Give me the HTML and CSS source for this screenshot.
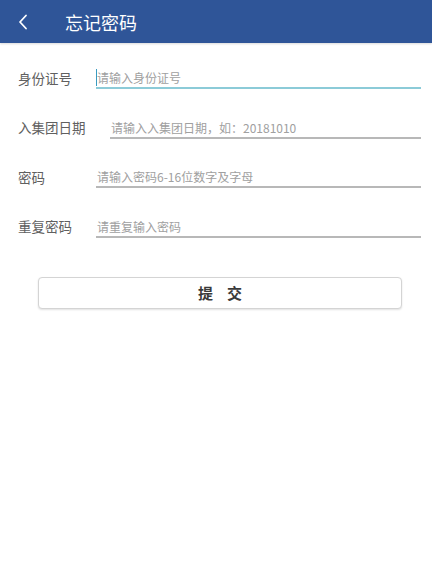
FILE: index.html
```html
<!DOCTYPE html>
<html lang="zh">
<head>
<meta charset="utf-8">
<link rel="stylesheet" href="styles.css">
</head>
<body>
<header class="topbar">
  <svg class="back" width="12" height="16" viewBox="0 0 12 16"><path d="M9 1.5 L3 8 L9 14.5" fill="none" stroke="#fff" stroke-width="1.8" stroke-linecap="round" stroke-linejoin="round"/></svg>
  <span class="title">忘记密码</span>
</header>
<main class="form">
  <div class="row r1">
    <span class="label">身份证号</span>
    <span class="field focus"><span class="caret"></span>请输入身份证号</span>
  </div>
  <div class="row r2">
    <span class="label">入集团日期</span>
    <span class="field wide">请输入入集团日期，如：20181010</span>
  </div>
  <div class="row r3">
    <span class="label">密码</span>
    <span class="field">请输入密码6-16位数字及字母</span>
  </div>
  <div class="row r4">
    <span class="label">重复密码</span>
    <span class="field">请重复输入密码</span>
  </div>
  <div class="btnwrap"><button class="submit"><span>提</span><span>交</span></button></div>
</main>
</body>
</html>
```
FILE: styles.css
```css
* { box-sizing: border-box; }
html, body { margin: 0; padding: 0; background: #fff; }
body { width: 432px; height: 586px; font-family: "Noto Sans CJK SC", "Noto Sans", sans-serif; }
.topbar {
  height: 43px;
  background: #2f5598;
  display: flex;
  align-items: center;
  padding-left: 17px;
  box-shadow: 0 1px 2px rgba(0,0,0,0.15);
}
.back { display: block; }
.title { color: #fff; font-size: 18px; margin-left: 36px; line-height: 1; }
.form { padding: 0 11px 0 18px; }
.row { display: flex; align-items: flex-end; height: 49.5px; }
.r1 { height: 46px; }
.label { font-size: 13.5px; color: #606060; width: 78px; flex: none; line-height: 18px; margin-bottom: 2.5px; }
.r2 .label { width: 92px; }
.field {
  flex: 1;
  font-size: 12px;
  color: #a0a0a0;
  border-bottom: 2px solid #b8b8b8;
  line-height: 15px;
  padding-bottom: 2px;
  padding-left: 1px;
  position: relative;
}
.field.focus { border-bottom-color: #8ccbd8; }
.caret { position: absolute; left: 0; top: -1px; width: 1px; height: 17px; background: #3a9bc0; }
.btnwrap { padding: 39px 20px 0 20px; }
.submit {
  display: flex;
  justify-content: center;
  align-items: center;
  gap: 14px;
  width: 364px;
  height: 32px;
  background: #fff;
  border: 1px solid #d4d4d4;
  border-radius: 4px;
  box-shadow: 0 1px 2px rgba(0,0,0,0.12);
  font-family: "Noto Sans CJK SC", sans-serif;
  font-size: 15px;
  font-weight: 700;
  color: #3a3a3a;
  padding: 0;
}
```
